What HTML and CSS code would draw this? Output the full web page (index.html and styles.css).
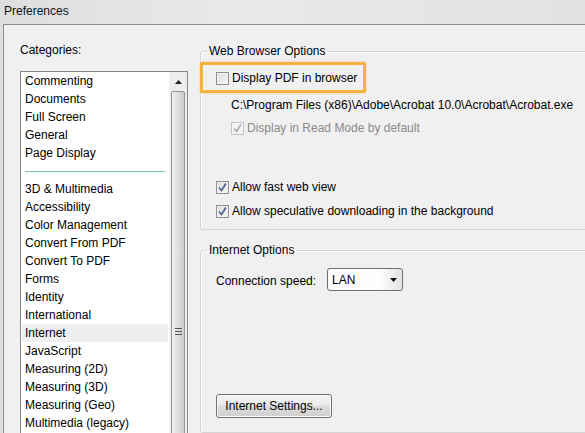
FILE: index.html
```html
<!DOCTYPE html>
<html>
<head>
  <meta charset="UTF-8">
  <title>Preferences</title>
  <link rel="stylesheet" href="styles.css">
</head>
<body>
  <div class="titlebar">Preferences</div>

  <div class="dialog">
    <!-- Left: category list -->
    <div class="sidebar">
      <div class="sidebar-label">Categories:</div>
      <div class="listbox">
        <div class="items">
          <div class="item">Commenting</div>
          <div class="item">Documents</div>
          <div class="item">Full Screen</div>
          <div class="item">General</div>
          <div class="item">Page Display</div>
          <div class="separator"></div>
          <div class="item">3D &amp; Multimedia</div>
          <div class="item">Accessibility</div>
          <div class="item">Color Management</div>
          <div class="item">Convert From PDF</div>
          <div class="item">Convert To PDF</div>
          <div class="item">Forms</div>
          <div class="item">Identity</div>
          <div class="item">International</div>
          <div class="item selected">Internet</div>
          <div class="item">JavaScript</div>
          <div class="item">Measuring (2D)</div>
          <div class="item">Measuring (3D)</div>
          <div class="item">Measuring (Geo)</div>
          <div class="item">Multimedia (legacy)</div>
        </div>
        <div class="scrollbar">
          <div class="scroll-up">
            <svg width="7" height="4" viewBox="0 0 7 4"><path d="M0 4 L3.5 0 L7 4 Z" fill="#222"/></svg>
          </div>
          <div class="thumb">
            <div class="grip"></div>
          </div>
        </div>
      </div>
    </div>

    <!-- Right: options -->
    <div class="content">
      <fieldset class="group group-browser">
        <legend>Web Browser Options</legend>

        <div class="row highlight">
          <span class="checkbox"></span>
          <span>Display PDF in browser</span>
        </div>

        <div class="path">C:\Program Files (x86)\Adobe\Acrobat 10.0\Acrobat\Acrobat.exe</div>

        <div class="row indent disabled">
          <span class="checkbox checked">
            <svg width="11" height="11" viewBox="0 0 11 11"><path d="M2 5.5 L4.5 8.5 L9 1.5" fill="none" stroke="#a9a9a9" stroke-width="1.6"/></svg>
          </span>
          <span>Display in Read Mode by default</span>
        </div>

        <div class="row spaced">
          <span class="checkbox checked">
            <svg width="11" height="11" viewBox="0 0 11 11"><path d="M2 5.5 L4.5 8.5 L9 1.5" fill="none" stroke="#4a5e8c" stroke-width="1.6"/></svg>
          </span>
          <span>Allow fast web view</span>
        </div>

        <div class="row tight">
          <span class="checkbox checked">
            <svg width="11" height="11" viewBox="0 0 11 11"><path d="M2 5.5 L4.5 8.5 L9 1.5" fill="none" stroke="#4a5e8c" stroke-width="1.6"/></svg>
          </span>
          <span>Allow speculative downloading in the background</span>
        </div>
      </fieldset>

      <fieldset class="group group-internet">
        <legend>Internet Options</legend>

        <div class="speed-row">
          <span class="speed-label">Connection speed:</span>
          <div class="select">
            <span class="select-value">LAN</span>
            <span class="select-arrow">
              <svg width="7" height="4" viewBox="0 0 7 4"><path d="M0 0 L7 0 L3.5 4 Z" fill="#111"/></svg>
            </span>
          </div>
        </div>

        <button class="settings-button">Internet Settings...</button>
      </fieldset>
    </div>
  </div>
</body>
</html>
```

FILE: styles.css
```css
html, body {
  margin: 0;
  padding: 0;
  height: 100%;
  overflow: hidden;
}
body {
  font-family: "Liberation Sans", Arial, sans-serif;
  font-size: 12px;
  color: #000;
  background: linear-gradient(to right, #dedede, #e9e9e9 40%, #e2e2e2);
}
.titlebar {
  height: 24px;
  line-height: 22px;
  padding-left: 4px;
  color: #111;
}
.dialog {
  display: flex;
  margin-left: 3px;
  height: 408px;
  border-top: 1px solid #8c8c8c;
  border-left: 1px solid #8c8c8c;
  background: #f0f0f0;
  overflow: hidden;
}

/* Sidebar */
.sidebar {
  width: 180px;
  flex-shrink: 0;
  padding-left: 16px;
  padding-top: 18px;
}
.sidebar-label {
  line-height: 14px;
  margin-bottom: 14px;
}
.listbox {
  display: flex;
  width: 166px;
  height: 400px;
  border: 1px solid #828790;
  background: #fff;
}
.items {
  flex: 1;
}
.item {
  height: 18px;
  line-height: 18px;
  padding-left: 4px;
  white-space: nowrap;
  margin-right: 1px;
}
.item.selected {
  background: #efefef;
  margin-left: 1px;
  padding-left: 3px;
}
.separator {
  height: 18px;
  position: relative;
}
.separator::after {
  content: "";
  position: absolute;
  left: 4px;
  right: 4px;
  top: 9px;
  border-top: 1px solid #76bcb9;
}
.scrollbar {
  width: 17px;
  display: flex;
  flex-direction: column;
  background: #eeeeee;
  border-left: 1px solid #f4f4f4;
}
.scroll-up {
  height: 17px;
  display: flex;
  align-items: center;
  justify-content: center;
  padding-top: 2px;
  box-sizing: border-box;
}
.thumb {
  flex: 1;
  margin: 2px 2px 0 1px;
  border: 1px solid #959595;
  border-radius: 2px;
  background: linear-gradient(to right, #f1f1f1, #e2e2e2 40%, #cdcdcd);
  padding-top: 236px;
}
.grip {
  width: 7px;
  height: 7px;
  margin-left: 3px;
  background: repeating-linear-gradient(to bottom, #555 0, #555 1px, transparent 1px, transparent 3px);
}

/* Content */
.content {
  flex: 1;
  display: flex;
  flex-direction: column;
  margin-right: -12px;
}
.group {
  margin: 0;
  padding: 0 0 0 15px;
  border: 1px solid #d5d5d5;
  border-radius: 3px;
  box-shadow: inset 1px 1px 0 #fff;
}
.group legend {
  margin-left: -9px;
  padding: 0 2px;
  line-height: 14px;
}
.group-browser {
  margin-top: 19px;
  padding-top: 11px;
  padding-bottom: 9px;
}
.group-internet {
  margin-top: 13px;
  padding-top: 11px;
  padding-bottom: 11px;
  flex: 1;
}
.row {
  display: flex;
  align-items: center;
  height: 18px;
  white-space: nowrap;
}
.row .checkbox {
  margin-right: 3px;
}
.highlight {
  position: relative;
  align-self: flex-start;
}
.highlight::before {
  content: "";
  position: absolute;
  left: -16px;
  top: -7px;
  width: 160px;
  height: 25px;
  border: 3px solid #f5b13d;
  border-radius: 2px;
  box-shadow: 0 0 2px rgba(245, 177, 61, 0.7);
}
.path {
  height: 18px;
  line-height: 18px;
  margin-top: 9px;
  padding-left: 15px;
  white-space: nowrap;
}
.indent {
  margin-top: 5px;
  padding-left: 15px;
}
.disabled {
  color: #8a8a8a;
}
.spaced {
  margin-top: 41px;
}
.tight {
  margin-top: 6px;
}
.checkbox {
  width: 11px;
  height: 11px;
  border: 1px solid #8e8f8f;
  background: linear-gradient(135deg, #dcdcdc, #f6f6f6);
  box-shadow: inset 0 0 0 1px #f4f4f4;
  display: inline-flex;
  align-items: center;
  justify-content: center;
  flex-shrink: 0;
}
.disabled .checkbox {
  border-color: #c4c4c4;
  background: #f4f4f4;
}

.speed-row {
  display: flex;
  align-items: center;
}
.speed-label {
  width: 111px;
  padding-top: 3px;
}
.select {
  width: 74px;
  height: 21px;
  border: 1px solid #707070;
  border-radius: 3px;
  background: linear-gradient(to right, #fdfdfd 70%, #e4e4e4);
  display: flex;
  align-items: center;
}
.select-value {
  flex: 1;
  padding-left: 4px;
  padding-top: 1px;
}
.select-arrow {
  width: 18px;
  display: flex;
  justify-content: center;
  padding-top: 1px;
}
.settings-button {
  align-self: flex-start;
  margin-top: 103px;
  width: 116px;
  height: 24px;
  border: 1px solid #707070;
  border-radius: 3px;
  background: linear-gradient(to bottom, #f3f3f3, #ebebeb 45%, #dddddd 50%, #cfcfcf);
  box-shadow: inset 0 0 0 1px #fbfbfb;
  font-family: inherit;
  font-size: 12px;
  color: #000;
  padding: 0;
}
```
